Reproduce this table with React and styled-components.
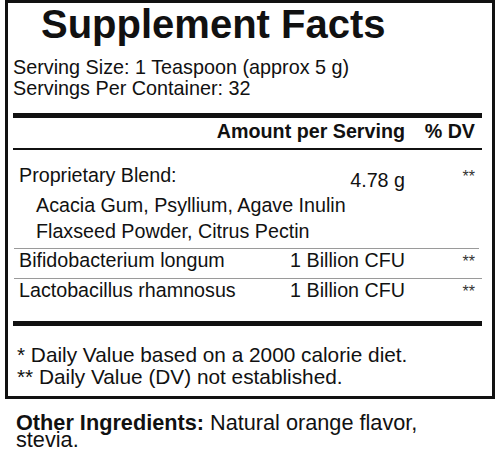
import React from 'react';
import styled, { createGlobalStyle } from 'styled-components';

const GlobalStyle = createGlobalStyle`
    html, body {
        margin: 0;
        padding: 0;
        background: #ffffff;
    }
    body {
        font-family: "Liberation Sans", Arial, Helvetica, sans-serif;
        color: #111111;
    }
`;

const Page = styled.div`
    width: 500px;
    height: 455px;
    overflow: hidden;
`;

const Label = styled.div`
    margin-left: 5px;
    width: 490px;
    height: 399px;
    box-sizing: border-box;
    border: 3px solid #111;
    padding: 0 10px 0 5px;
`;

const Title = styled.h1`
    margin: 0 0 13px;
    padding: 1px 0 0 28px;
    font-size: 40px;
    line-height: 40px;
    font-weight: bold;
    white-space: nowrap;
`;

const ServingLine = styled.div`
    font-size: 19.8px;
    line-height: 21px;
    white-space: nowrap;
`;

const Rule = styled.div`
    height: ${({ weight }) => weight}px;
    background: ${({ light }) => (light ? '#9a9a9a' : '#111')};
    margin: ${({ gap }) => gap || '0'};
`;

const Row = styled.div`
    display: flex;
    align-items: flex-start;
    font-size: 19.7px;
    line-height: 22px;
    white-space: nowrap;
`;

const HeaderLabel = styled.div`
    flex: 1;
    text-align: right;
    font-weight: bold;
`;

const Name = styled.div`
    flex: 1;
    padding-left: 6px;
`;

const SubLine = styled.div`
    padding-left: 23px;
    font-size: 19.7px;
    line-height: 26px;
    white-space: nowrap;
`;

const Amount = styled.div`
    width: 140px;
    text-align: right;
    padding-top: ${({ drop }) => drop || 0}px;
`;

const Dv = styled.div`
    width: 70px;
    padding-right: 7px;
    text-align: right;
    font-weight: ${({ bold }) => (bold ? 'bold' : 'normal')};
`;

const Stars = styled.span`
    font-size: 16px;
    color: #333;
`;

const Footnotes = styled.div`
    padding: 18px 0 0 4px;
    font-size: 20.8px;
    line-height: 22px;
    white-space: nowrap;
`;

const Other = styled.p`
    margin: 15px 0 0 16px;
    font-size: 21.7px;
    line-height: 17px;
`;

const App = () => {
    const probiotics = [
        { name: 'Bifidobacterium longum', amount: '1 Billion CFU', gap: '4px 3px 0 1px' },
        { name: 'Lactobacillus rhamnosus', amount: '1 Billion CFU', gap: '5px 0 0 1px' },
    ];

    return (
        <Page>
            <GlobalStyle />
            <Label>
                <Title>Supplement Facts</Title>
                <ServingLine>Serving Size: 1 Teaspoon (approx 5 g)</ServingLine>
                <ServingLine>Servings Per Container: 32</ServingLine>
                <Rule weight={5} gap="14px 0 0" />
                <Row style={{ padding: '2px 0 6px' }}>
                    <HeaderLabel>Amount per Serving</HeaderLabel>
                    <Dv bold>% DV</Dv>
                </Row>
                <Rule weight={2} />
                <Row style={{ padding: '14px 0 1px' }}>
                    <Name>Proprietary Blend:</Name>
                    <Amount drop={5}>4.78 g</Amount>
                    <Dv><Stars>**</Stars></Dv>
                </Row>
                <SubLine>Acacia Gum, Psyllium, Agave Inulin</SubLine>
                <SubLine>Flaxseed Powder, Citrus Pectin</SubLine>
                {probiotics.map((item, index) => (
                    <React.Fragment key={index}>
                        <Rule weight={1} light gap={item.gap} />
                        <Row>
                            <Name>{item.name}</Name>
                            <Amount>{item.amount}</Amount>
                            <Dv><Stars>**</Stars></Dv>
                        </Row>
                    </React.Fragment>
                ))}
                <Rule weight={5} gap="18px 0 0" />
                <Footnotes>
                    <div>* Daily Value based on a 2000 calorie diet.</div>
                    <div>** Daily Value (DV) not established.</div>
                </Footnotes>
            </Label>
            <Other>
                <b>Other Ingredients:</b> Natural orange flavor,<br />stevia.
            </Other>
        </Page>
    );
};

export default App;
